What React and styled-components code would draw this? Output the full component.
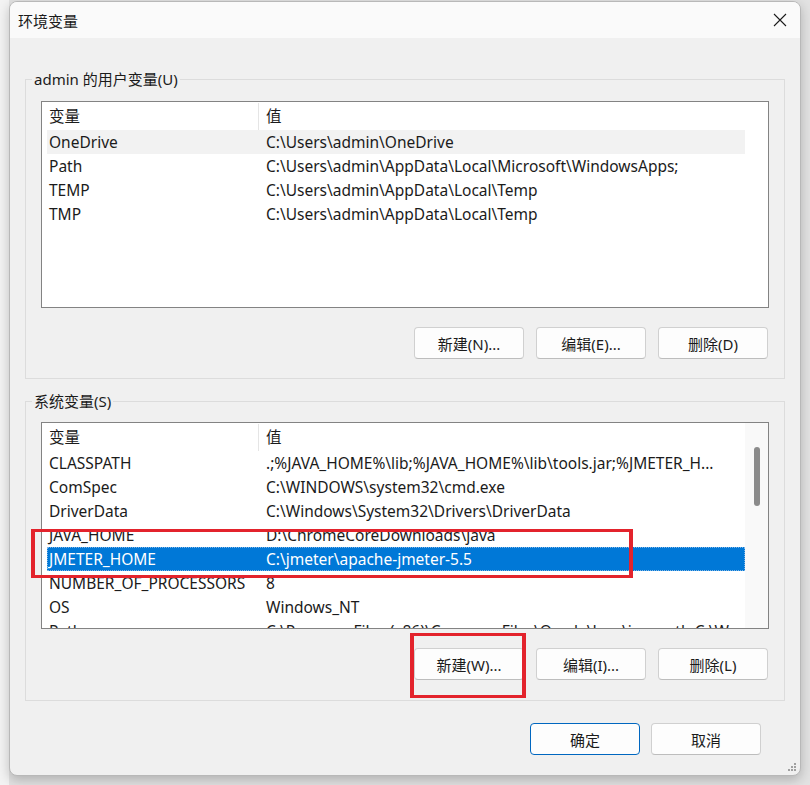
import React from "react";
import styled, { createGlobalStyle } from "styled-components";

const GlobalStyle = createGlobalStyle`
  html, body {
    margin: 0;
    padding: 0;
  }
  body {
    width: 810px;
    height: 785px;
    overflow: hidden;
    font-family: "Noto Sans", "Noto Sans CJK SC", sans-serif;
    color: #1b1b1b;
  }
`;

const Screen = styled.div`
  position: relative;
  width: 810px;
  height: 785px;
  box-sizing: border-box;
  padding: 1px 0 0 9px;
  background: linear-gradient(to right, #f3f3f3 0 9px, #e2e2e2 9px);
`;

const Dialog = styled.div`
  position: relative;
  width: 792px;
  height: 775px;
  box-sizing: border-box;
  border: 1px solid #b8b8b8;
  border-radius: 8px;
  background: #f0f0f0;
  overflow: hidden;
  display: flex;
  flex-direction: column;
  box-shadow: 0 4px 12px rgba(0, 0, 0, 0.22);
`;

const TitleBar = styled.div`
  height: 36px;
  flex: none;
  display: flex;
  align-items: center;
  justify-content: space-between;
  padding: 0 13px 0 8px;
  background: #fafafa;
  font-size: 15px;
`;

const Body = styled.div`
  display: flex;
  flex-direction: column;
  padding: 0 15px;
`;

const GroupBox = styled.fieldset`
  margin: ${p => p.$top}px 0 0;
  padding: 0 15px ${p => p.$bottom || 19}px 15px;
  border: 1px solid #dcdcdc;
  min-width: 0;
`;

const Legend = styled.legend`
  margin-left: -9px;
  padding: 0 2px;
  font-size: 15px;
  line-height: 20px;
`;

const List = styled.div`
  margin-top: ${p => p.$top}px;
  height: 207px;
  box-sizing: border-box;
  border: 1px solid #838383;
  background: #fff;
  display: flex;
  overflow: hidden;
`;

const Rows = styled.div`
  flex: 1;
  padding-left: 5px;
  padding-top: 1px;
  overflow: hidden;
`;

const Grid = styled.div`
  display: grid;
  grid-template-columns: 212px 487px;
  height: ${p => (p.$head ? 27 : 24)}px;
  line-height: ${p => (p.$head ? 27 : 24)}px;
  font-size: 15.5px;
  white-space: nowrap;
  background: ${p => (p.$selected ? "#0078d7" : p.$hover ? "#f2f2f2" : "transparent")};
  color: ${p => (p.$selected ? "#fff" : "#1b1b1b")};
  outline: ${p => (p.$selected ? "1px dotted #7fb5e6" : "none")};
  outline-offset: -1px;
`;

const Cell = styled.div`
  overflow: hidden;
  padding-left: ${p => (p.$value ? 7 : 2)}px;
  border-right: ${p => (p.$head ? "1px solid #e5e5e5" : "none")};
`;

const Track = styled.div`
  width: 23px;
  flex: none;
  background: ${p => (p.$scroll ? "#f9f9f9" : "#fff")};
  display: flex;
  justify-content: center;
  padding-top: 24px;
  box-sizing: border-box;
`;

const Thumb = styled.div`
  width: 6px;
  height: 59px;
  border-radius: 3px;
  background: #8b8b8b;
`;

const ButtonRow = styled.div`
  display: flex;
  justify-content: flex-end;
  gap: ${p => p.$gap || 12}px;
  margin-top: ${p => p.$top}px;
  padding-right: ${p => p.$right || 1}px;
`;

const Button = styled.button`
  width: 110px;
  height: 32px;
  box-sizing: border-box;
  border: 1px solid ${p => (p.$primary ? "#0067c0" : "#d0d0d0")};
  border-bottom-color: ${p => (p.$primary ? "#0067c0" : "#bdbdbd")};
  border-radius: 4px;
  background: #fdfdfd;
  font-family: "Noto Sans", "Noto Sans CJK SC", sans-serif;
  font-size: 15px;
  color: #1b1b1b;
  padding: 0;
`;

const Mark = styled.div`
  position: absolute;
  left: ${p => p.$x}px;
  top: ${p => p.$y}px;
  width: ${p => p.$w}px;
  height: ${p => p.$h}px;
  box-sizing: border-box;
  border: 3px solid #e3232c;
  border-left-width: 4px;
  border-right-width: 4px;
`;

const Grip = styled.svg`
  position: absolute;
  right: 3px;
  bottom: 3px;
`;

const userVars = [
  ["OneDrive", String.raw`C:\Users\admin\OneDrive`],
  ["Path", String.raw`C:\Users\admin\AppData\Local\Microsoft\WindowsApps;`],
  ["TEMP", String.raw`C:\Users\admin\AppData\Local\Temp`],
  ["TMP", String.raw`C:\Users\admin\AppData\Local\Temp`],
];

const sysVars = [
  ["CLASSPATH", String.raw`.;%JAVA_HOME%\lib;%JAVA_HOME%\lib\tools.jar;%JMETER_H...`],
  ["ComSpec", String.raw`C:\WINDOWS\system32\cmd.exe`],
  ["DriverData", String.raw`C:\Windows\System32\Drivers\DriverData`],
  ["JAVA_HOME", String.raw`D:\ChromeCoreDownloads\java`],
  ["JMETER_HOME", String.raw`C:\jmeter\apache-jmeter-5.5`],
  ["NUMBER_OF_PROCESSORS", "8"],
  ["OS", "Windows_NT"],
  ["Path", String.raw`C:\Program Files (x86)\Common Files\Oracle\Java\javapath;C:\W...`],
];

const VarList = ({ items, top, hover, selected, scroll }) => (
  <List $top={top}>
    <Rows>
      <Grid $head>
        <Cell $head>变量</Cell>
        <Cell $head $value>值</Cell>
      </Grid>
      {items.map(([name, value]) => (
        <Grid key={name + value} $hover={name === hover} $selected={name === selected}>
          <Cell>{name}</Cell>
          <Cell $value>{value}</Cell>
        </Grid>
      ))}
    </Rows>
    <Track $scroll={scroll}>{scroll && <Thumb />}</Track>
  </List>
);

const Close = () => (
  <svg width="14" height="14" viewBox="0 0 14 14">
    <path d="M1 1 L13 13 M13 1 L1 13" stroke="#1b1b1b" strokeWidth="1.1" fill="none" />
  </svg>
);

export default function App() {
  return (
    <Screen>
      <GlobalStyle />
      <Dialog>
        <TitleBar>
          <span>环境变量</span>
          <Close />
        </TitleBar>
        <Body>
          <GroupBox $top={31}>
            <Legend>admin 的用户变量(U)</Legend>
            <VarList items={userVars} top={12} hover="OneDrive" />
            <ButtonRow $top={19}>
              <Button>新建(N)...</Button>
              <Button>编辑(E)...</Button>
              <Button>删除(D)</Button>
            </ButtonRow>
          </GroupBox>
          <GroupBox $top={12} $bottom={20}>
            <Legend>系统变量(S)</Legend>
            <VarList items={sysVars} top={11} selected="JMETER_HOME" scroll />
            <ButtonRow $top={19}>
              <Button>新建(W)...</Button>
              <Button>编辑(I)...</Button>
              <Button>删除(L)</Button>
            </ButtonRow>
          </GroupBox>
          <ButtonRow $top={22} $gap={11} $right={24}>
            <Button $primary>确定</Button>
            <Button>取消</Button>
          </ButtonRow>
        </Body>
        <Grip width="10" height="10" viewBox="0 0 10 10">
          {[[8, 2], [8, 5], [5, 5], [8, 8], [5, 8], [2, 8]].map(([x, y]) => (
            <rect key={x + "-" + y} x={x - 1} y={y - 1} width="2" height="2" fill="#a0a0a0" />
          ))}
        </Grip>
      </Dialog>
      <Mark $x={31} $y={529} $w={602} $h={49} />
      <Mark $x={410} $y={633} $w={116} $h={65} />
    </Screen>
  );
}
